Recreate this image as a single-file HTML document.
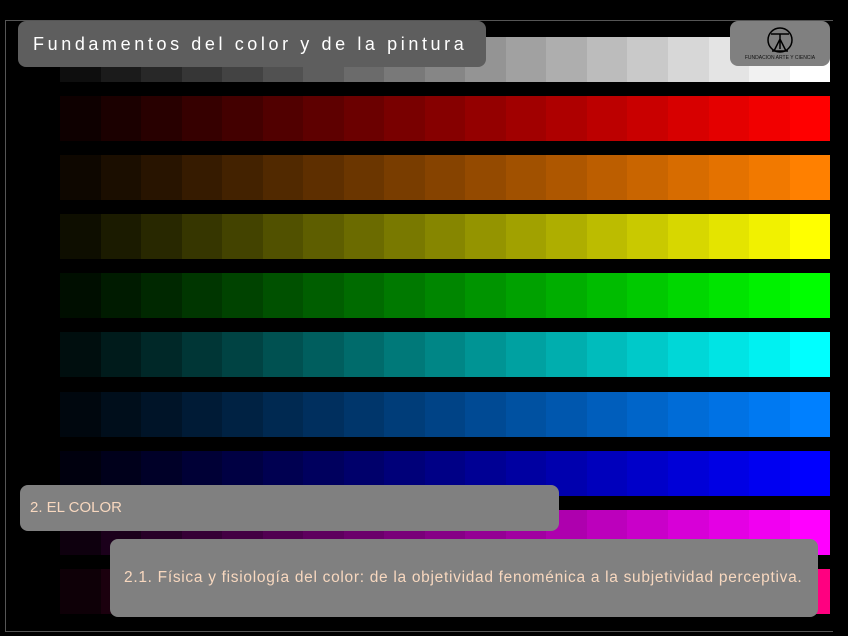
<!DOCTYPE html>
<html><head><meta charset="utf-8"><style>
*{margin:0;padding:0;box-sizing:border-box}
body{width:848px;height:636px;background:#000;position:relative;overflow:hidden;font-family:"Liberation Sans",sans-serif}
.frame{position:absolute;left:5px;top:20px;width:828px;height:612px;border:1px solid #555;border-right:none}
.row{position:absolute;left:60px;width:770px;height:45px;display:flex}
.row div{flex:1}
.a1{background:rgba(0,0,0,.947)}.a2{background:rgba(0,0,0,.895)}.a3{background:rgba(0,0,0,.842)}.a4{background:rgba(0,0,0,.789)}.a5{background:rgba(0,0,0,.737)}.a6{background:rgba(0,0,0,.684)}.a7{background:rgba(0,0,0,.632)}.a8{background:rgba(0,0,0,.579)}.a9{background:rgba(0,0,0,.526)}.a10{background:rgba(0,0,0,.474)}.a11{background:rgba(0,0,0,.421)}.a12{background:rgba(0,0,0,.368)}.a13{background:rgba(0,0,0,.316)}.a14{background:rgba(0,0,0,.263)}.a15{background:rgba(0,0,0,.211)}.a16{background:rgba(0,0,0,.158)}.a17{background:rgba(0,0,0,.105)}.a18{background:rgba(0,0,0,.053)}.a19{background:transparent}
.box{position:absolute;background:#808080;border-radius:8px}
</style></head><body>
<div class="frame"></div>
<div class="row" style="top:37px;background:#fff"><div class="a1"></div><div class="a2"></div><div class="a3"></div><div class="a4"></div><div class="a5"></div><div class="a6"></div><div class="a7"></div><div class="a8"></div><div class="a9"></div><div class="a10"></div><div class="a11"></div><div class="a12"></div><div class="a13"></div><div class="a14"></div><div class="a15"></div><div class="a16"></div><div class="a17"></div><div class="a18"></div><div class="a19"></div></div>
<div class="row" style="top:96px;background:#ff0000"><div class="a1"></div><div class="a2"></div><div class="a3"></div><div class="a4"></div><div class="a5"></div><div class="a6"></div><div class="a7"></div><div class="a8"></div><div class="a9"></div><div class="a10"></div><div class="a11"></div><div class="a12"></div><div class="a13"></div><div class="a14"></div><div class="a15"></div><div class="a16"></div><div class="a17"></div><div class="a18"></div><div class="a19"></div></div>
<div class="row" style="top:155px;background:#ff8000"><div class="a1"></div><div class="a2"></div><div class="a3"></div><div class="a4"></div><div class="a5"></div><div class="a6"></div><div class="a7"></div><div class="a8"></div><div class="a9"></div><div class="a10"></div><div class="a11"></div><div class="a12"></div><div class="a13"></div><div class="a14"></div><div class="a15"></div><div class="a16"></div><div class="a17"></div><div class="a18"></div><div class="a19"></div></div>
<div class="row" style="top:214px;background:#ffff00"><div class="a1"></div><div class="a2"></div><div class="a3"></div><div class="a4"></div><div class="a5"></div><div class="a6"></div><div class="a7"></div><div class="a8"></div><div class="a9"></div><div class="a10"></div><div class="a11"></div><div class="a12"></div><div class="a13"></div><div class="a14"></div><div class="a15"></div><div class="a16"></div><div class="a17"></div><div class="a18"></div><div class="a19"></div></div>
<div class="row" style="top:273px;background:#00ff00"><div class="a1"></div><div class="a2"></div><div class="a3"></div><div class="a4"></div><div class="a5"></div><div class="a6"></div><div class="a7"></div><div class="a8"></div><div class="a9"></div><div class="a10"></div><div class="a11"></div><div class="a12"></div><div class="a13"></div><div class="a14"></div><div class="a15"></div><div class="a16"></div><div class="a17"></div><div class="a18"></div><div class="a19"></div></div>
<div class="row" style="top:332px;background:#00ffff"><div class="a1"></div><div class="a2"></div><div class="a3"></div><div class="a4"></div><div class="a5"></div><div class="a6"></div><div class="a7"></div><div class="a8"></div><div class="a9"></div><div class="a10"></div><div class="a11"></div><div class="a12"></div><div class="a13"></div><div class="a14"></div><div class="a15"></div><div class="a16"></div><div class="a17"></div><div class="a18"></div><div class="a19"></div></div>
<div class="row" style="top:392px;background:#0080ff"><div class="a1"></div><div class="a2"></div><div class="a3"></div><div class="a4"></div><div class="a5"></div><div class="a6"></div><div class="a7"></div><div class="a8"></div><div class="a9"></div><div class="a10"></div><div class="a11"></div><div class="a12"></div><div class="a13"></div><div class="a14"></div><div class="a15"></div><div class="a16"></div><div class="a17"></div><div class="a18"></div><div class="a19"></div></div>
<div class="row" style="top:451px;background:#0000ff"><div class="a1"></div><div class="a2"></div><div class="a3"></div><div class="a4"></div><div class="a5"></div><div class="a6"></div><div class="a7"></div><div class="a8"></div><div class="a9"></div><div class="a10"></div><div class="a11"></div><div class="a12"></div><div class="a13"></div><div class="a14"></div><div class="a15"></div><div class="a16"></div><div class="a17"></div><div class="a18"></div><div class="a19"></div></div>
<div class="row" style="top:510px;background:#ff00ff"><div class="a1"></div><div class="a2"></div><div class="a3"></div><div class="a4"></div><div class="a5"></div><div class="a6"></div><div class="a7"></div><div class="a8"></div><div class="a9"></div><div class="a10"></div><div class="a11"></div><div class="a12"></div><div class="a13"></div><div class="a14"></div><div class="a15"></div><div class="a16"></div><div class="a17"></div><div class="a18"></div><div class="a19"></div></div>
<div class="row" style="top:569px;background:#ff0080"><div class="a1"></div><div class="a2"></div><div class="a3"></div><div class="a4"></div><div class="a5"></div><div class="a6"></div><div class="a7"></div><div class="a8"></div><div class="a9"></div><div class="a10"></div><div class="a11"></div><div class="a12"></div><div class="a13"></div><div class="a14"></div><div class="a15"></div><div class="a16"></div><div class="a17"></div><div class="a18"></div><div class="a19"></div></div>

<div class="box" style="left:18px;top:21px;width:468px;height:46px;background:#5e5e5e;color:#fff;font-size:18px;letter-spacing:3.6px;line-height:46px;padding-left:15px">Fundamentos del color y de la pintura</div>
<div class="box" style="left:730px;top:21px;width:100px;height:45px;background:#808080">
<svg width="100" height="45" viewBox="0 0 100 45"><g fill="none" stroke="#000" stroke-width="1.5"><circle cx="50" cy="19" r="12"/><path d="M41 13h18M50 13v15M44 30l6-12 6 12M42 30h16"/></g><text x="50" y="38" font-size="5" text-anchor="middle" fill="#111" font-family="Liberation Sans">FUNDACION ARTE Y CIENCIA</text></svg></div>
<div class="box" style="left:20px;top:485px;width:539px;height:46px;color:#f8d8bf;font-size:15px;line-height:46px;padding-left:10px">2. EL COLOR</div>
<div class="box" style="left:110px;top:539px;width:708px;height:78px;color:#f8d8bf;font-size:15.5px;letter-spacing:0.7px;line-height:78px;padding-left:14px;white-space:nowrap">2.1. Física y fisiología del color: de la objetividad fenoménica a la subjetividad perceptiva.</div>
</body></html>
